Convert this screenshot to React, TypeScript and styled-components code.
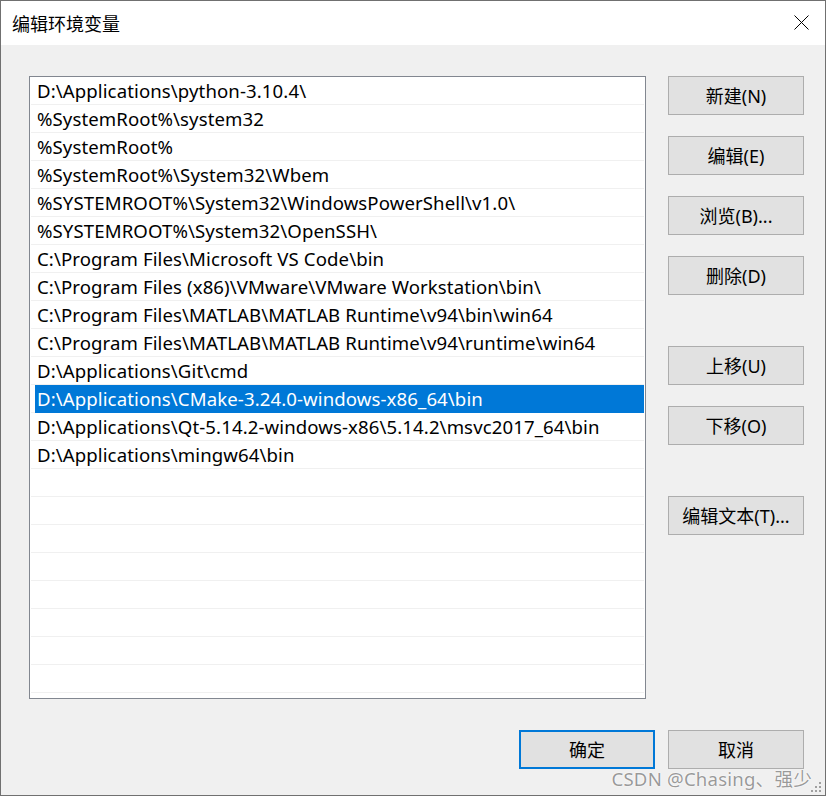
import React from 'react';
import styled, { createGlobalStyle } from 'styled-components';

const GlobalStyle = createGlobalStyle`
  html, body {
    margin: 0;
    padding: 0;
    background: #ffffff;
  }
  * {
    box-sizing: border-box;
  }
`;

const FONT = `"Noto Sans", "Noto Sans CJK SC", sans-serif`;

const Window = styled.div`
  position: relative;
  display: flex;
  flex-direction: column;
  width: 826px;
  height: 796px;
  border: 1px solid #707070;
  background: #f0f0f0;
  font-family: ${FONT};
  color: #000000;
`;

const TitleBar = styled.div`
  display: flex;
  align-items: center;
  justify-content: space-between;
  height: 44px;
  padding: 0 16px 0 11px;
  background: #ffffff;

  h1 {
    margin: 0;
    font-size: 18px;
    font-weight: 400;
    font-family: "Noto Sans CJK SC", sans-serif;
  }
`;

const CloseButton = styled.button`
  display: flex;
  align-items: center;
  justify-content: center;
  width: 16px;
  height: 16px;
  padding: 0;
  margin-top: -2px;
  border: none;
  background: transparent;
`;

const Body = styled.div`
  display: flex;
  flex-direction: column;
  padding: 31px 21px 0 28px;
`;

const Main = styled.div`
  display: flex;
  gap: 22px;
`;

const ListBox = styled.div`
  display: flex;
  flex-direction: column;
  width: 617px;
  height: 623px;
  padding: 0 1px 0 1px;
  border: 1px solid #828790;
  background: #ffffff;
  overflow: hidden;
`;

const Row = styled.div`
  display: flex;
  flex: 0 0 28px;
  height: 28px;
  padding-left: 4px;
  background: linear-gradient(#f0f0f0, #f0f0f0) bottom / 100% 1px no-repeat;
`;

const Cell = styled.div<{ $selected?: boolean }>`
  display: flex;
  align-items: center;
  flex: 1;
  padding-left: 2px;
  padding-bottom: 1px;
  font-size: 18.6px;
  letter-spacing: 0.1px;
  white-space: nowrap;
  color: ${({ $selected }) => ($selected ? '#ffffff' : '#000000')};
  background: ${({ $selected }) => ($selected ? '#0078d7' : 'transparent')};
`;

const Side = styled.div`
  display: flex;
  flex-direction: column;
`;

const Button = styled.button<{ $space?: number; $primary?: boolean }>`
  display: flex;
  align-items: center;
  justify-content: center;
  width: 136px;
  height: 39px;
  margin-top: ${({ $space }) => $space ?? 0}px;
  padding: 0 0 2px;
  border: ${({ $primary }) => ($primary ? '2px solid #0078d7' : '1px solid #adadad')};
  background: #e1e1e1;
  font-family: ${FONT};
  font-size: 18px;
  color: #000000;
`;

const Footer = styled.div`
  display: flex;
  justify-content: flex-end;
  gap: 13px;
  margin-top: 31px;
`;

const Watermark = styled.div`
  position: absolute;
  right: 13px;
  bottom: 4px;
  font-family: ${FONT};
  font-size: 18.6px;
  letter-spacing: 0.2px;
  color: rgba(120, 120, 120, 0.75);
  text-shadow: 0 0 2px #ffffff, 0 0 1px #ffffff;
  pointer-events: none;
`;

const Grip = styled.svg`
  position: absolute;
  right: 3px;
  bottom: 2px;
`;

const paths = [
  'D:\\Applications\\python-3.10.4\\',
  '%SystemRoot%\\system32',
  '%SystemRoot%',
  '%SystemRoot%\\System32\\Wbem',
  '%SYSTEMROOT%\\System32\\WindowsPowerShell\\v1.0\\',
  '%SYSTEMROOT%\\System32\\OpenSSH\\',
  'C:\\Program Files\\Microsoft VS Code\\bin',
  'C:\\Program Files (x86)\\VMware\\VMware Workstation\\bin\\',
  'C:\\Program Files\\MATLAB\\MATLAB Runtime\\v94\\bin\\win64',
  'C:\\Program Files\\MATLAB\\MATLAB Runtime\\v94\\runtime\\win64',
  'D:\\Applications\\Git\\cmd',
  'D:\\Applications\\CMake-3.24.0-windows-x86_64\\bin',
  'D:\\Applications\\Qt-5.14.2-windows-x86\\5.14.2\\msvc2017_64\\bin',
  'D:\\Applications\\mingw64\\bin',
];

const rows = [...paths, ...Array(22 - paths.length).fill('')];

const sideButtons = [
  { label: '新建(N)', space: 0 },
  { label: '编辑(E)', space: 21 },
  { label: '浏览(B)...', space: 21 },
  { label: '删除(D)', space: 21 },
  { label: '上移(U)', space: 51 },
  { label: '下移(O)', space: 21 },
  { label: '编辑文本(T)...', space: 51 },
];

const App: React.FC = () => {
  return (
    <>
      <GlobalStyle />
      <Window>
        <TitleBar>
          <h1>编辑环境变量</h1>
          <CloseButton aria-label="关闭">
            <svg width="15" height="15" viewBox="0 0 15 15">
              <path d="M0.5 0.5 L14.5 14.5 M14.5 0.5 L0.5 14.5" stroke="#000" strokeWidth="1" />
            </svg>
          </CloseButton>
        </TitleBar>
        <Body>
          <Main>
            <ListBox>
              {rows.map((p, i) => (
                <Row key={i}>
                  <Cell $selected={i === 11}>{p}</Cell>
                </Row>
              ))}
            </ListBox>
            <Side>
              {sideButtons.map((b) => (
                <Button key={b.label} $space={b.space}>
                  {b.label}
                </Button>
              ))}
            </Side>
          </Main>
          <Footer>
            <Button $primary>确定</Button>
            <Button>取消</Button>
          </Footer>
        </Body>
        <Watermark>CSDN @Chasing、强少</Watermark>
        <Grip width="11" height="11" viewBox="0 0 11 11">
          <g fill="#a0a0a0">
            <rect x="8" y="0" width="2" height="2" />
            <rect x="4" y="4" width="2" height="2" />
            <rect x="8" y="4" width="2" height="2" />
            <rect x="0" y="8" width="2" height="2" />
            <rect x="4" y="8" width="2" height="2" />
            <rect x="8" y="8" width="2" height="2" />
          </g>
        </Grip>
      </Window>
    </>
  );
};

export default App;
